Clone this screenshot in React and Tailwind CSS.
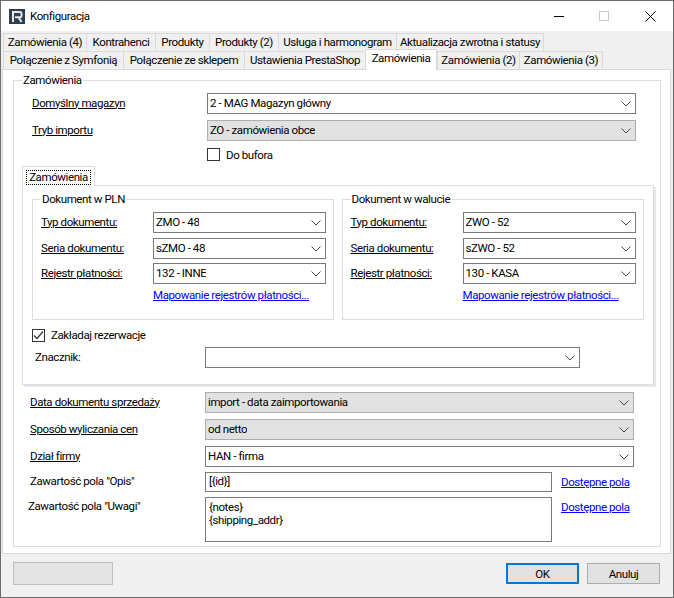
import React from 'react'

const FONT = "font-['Roboto','Liberation_Sans',sans-serif]"

function Chevron() {
  return (
    <svg width="10" height="6" viewBox="0 0 10 6" className="shrink-0" fill="none">
      <path d="M0.5 0.5 L5 5 L9.5 0.5" stroke="#4a4a4a" strokeWidth="1" />
    </svg>
  )
}

function Combo({ value, disabled, className = '' }) {
  return (
    <div
      className={`flex items-center justify-between h-[21px] pl-[2px] pr-[4px] border ${
        disabled ? 'bg-[#e1e1e1] border-[#adadad]' : 'bg-white border-[#7a7a7a]'
      } ${className}`}
    >
      <span className="truncate -mt-[2px]">{value}</span>
      <Chevron />
    </div>
  )
}

function Tab({ label, width, selected }) {
  if (selected) {
    return (
      <div
        className="relative z-10 h-[21px] -mt-[2px] flex justify-center bg-white border border-b-0 border-[#d9d9d9]"
        style={{ width }}
      >
        {label}
      </div>
    )
  }
  return (
    <div
      className="h-[19px] flex items-center justify-center pb-[1px] bg-[#f0f0f0] border border-[#d9d9d9] -mr-px"
      style={{ width }}
    >
      {label}
    </div>
  )
}

function DocGroup({ title, type, series, register, className = '' }) {
  return (
    <div className={`relative h-[121px] border border-[#dcdcdc] pt-[12px] pl-[8px] ${className}`}>
      <span className="absolute -top-[9px] left-[8px] bg-white px-[1px]">{title}</span>
      <div className="flex items-center h-[21px]">
        <span className="w-[112px] underline -mt-[2px]">Typ dokumentu:</span>
        <Combo value={type} className="w-[173px]" />
      </div>
      <div className="flex items-center h-[21px] mt-[5px]">
        <span className="w-[112px] underline -mt-[2px]">Seria dokumentu:</span>
        <Combo value={series} className="w-[173px]" />
      </div>
      <div className="flex items-center h-[21px] mt-[4px]">
        <span className="w-[112px] underline -mt-[2px]">Rejestr płatności:</span>
        <Combo value={register} className="w-[173px]" />
      </div>
      <a className="block ml-[112px] mt-[3px] leading-[16px] text-[#0000ff] underline">Mapowanie rejestrów płatności...</a>
    </div>
  )
}

function FormRow({ label, className = '', children }) {
  return (
    <div className={`flex items-center ${className}`}>
      <span className="w-[175px] pl-[16px] underline -mt-[2px]">{label}</span>
      {children}
    </div>
  )
}

export default function App() {
  const rowOne = [
    ['Zamówienia (4)', 84],
    ['Kontrahenci', 70],
    ['Produkty', 55],
    ['Produkty (2)', 70],
    ['Usługa i harmonogram', 119],
    ['Aktualizacja zwrotna i statusy', 148],
  ]
  const rowTwo = [
    ['Połączenie z Symfonią', 121],
    ['Połączenie ze sklepem', 122],
    ['Ustawienia PrestaShop', 122],
    ['Zamówienia', 72, true],
    ['Zamówienia (2)', 83],
    ['Zamówienia (3)', 84],
  ]

  return (
    <div className={`${FONT} relative w-[674px] h-[598px] flex flex-col overflow-hidden whitespace-nowrap bg-[#f0f0f0] border border-[#6b6b6b] text-[11.5px] tracking-[-0.4px] leading-[16px] text-black`}>
      {/* TITLE BAR */}
      <div className="flex items-center h-[30px] shrink-0 bg-white pl-[8px]">
        <svg width="16" height="15" viewBox="0 0 16 15" className="shrink-0">
          <rect width="16" height="15" fill="#2e3f4f" />
          <path d="M4 13 V3 H11 Q12.5 3 12.5 4.5 V7 Q12.5 8.3 11 8.3 H6 M9.5 8.3 L12.5 13" stroke="#e8e8e8" strokeWidth="2" fill="none" />
        </svg>
        <span className="ml-[5px]">Konfiguracja</span>
        <div className="ml-auto flex items-center pr-[17px]">
          <div className="w-[10px] h-px bg-black mr-[35px]" />
          <div className="w-[10px] h-[10px] border border-[#c8c8c8] mr-[36px]" />
          <svg width="11" height="11" viewBox="0 0 11 11" fill="none">
            <path d="M0.5 0.5 L10.5 10.5 M10.5 0.5 L0.5 10.5" stroke="#000" strokeWidth="1" />
          </svg>
        </div>
      </div>

      {/* OUTER TABS */}
      <div className="flex flex-col pl-[2px] pt-[2px] shrink-0">
        <div className="flex h-[18px]">
          {rowOne.map(([label, width]) => <Tab key={label} label={label} width={width} />)}
        </div>
        <div className="flex h-[18px]">
          {rowTwo.map(([label, width, selected]) => <Tab key={label} label={label} width={width} selected={selected} />)}
        </div>
      </div>

      {/* TAB PAGE */}
      <div className="ml-[1px] mr-[2px] h-[485px] shrink-0 bg-white border border-[#d9d9d9] pt-[10px] pl-[10px] pr-[9px]">
        <div className="relative h-[467px] border border-[#dcdcdc] pt-[12px]">
          <span className="absolute -top-[9px] left-[8px] bg-white px-[1px]">Zamówienia</span>

          <div className="flex items-center pl-[18px]">
            <span className="w-[175px] underline -mt-[2px]">Domyślny magazyn</span>
            <Combo value="2 - MAG Magazyn główny" className="w-[429px]" />
          </div>
          <div className="flex items-center pl-[18px] mt-[6px]">
            <span className="w-[175px] underline -mt-[2px]">Tryb importu</span>
            <Combo value="ZO - zamówienia obce" disabled className="w-[429px]" />
          </div>
          <div className="flex items-center ml-[193px] mt-[7px] h-[13px]">
            <div className="w-[13px] h-[13px] border border-[#333] bg-white" />
            <span className="ml-[6px]">Do bufora</span>
          </div>

          {/* INNER TAB CONTROL */}
          <div className="ml-[8px] mt-[5px] w-[632px]">
            <div className="relative z-10 w-[73px] h-[20px] bg-white border border-b-0 border-[#d9d9d9] p-[3px] pb-[1px]">
              <div className="h-[15px] leading-[13px] text-center border border-dotted border-black">Zamówienia</div>
            </div>
            <div className="h-[200px] -mt-px border border-[#dcdcdc] shadow-[2px_2px_0_#e8e8e8] pt-[13px] px-[9px]">
              <div className="flex gap-[8px]">
                <DocGroup title="Dokument w PLN" type="ZMO - 48" series="sZMO - 48" register="132 - INNE" className="w-[303px]" />
                <DocGroup title="Dokument w walucie" type="ZWO - 52" series="sZWO - 52" register="130 - KASA" className="w-[304px]" />
              </div>
              <div className="flex items-center mt-[9px] h-[13px]">
                <div className="w-[13px] h-[13px] border border-[#333] flex items-center justify-center">
                  <svg width="11" height="11" viewBox="0 0 11 11" fill="none">
                    <path d="M1 5.5 L4 8.5 L10 1.5" stroke="#333" strokeWidth="1.2" />
                  </svg>
                </div>
                <span className="ml-[6px] -mt-[1px]">Zakładaj rezerwacje</span>
              </div>
              <div className="flex items-center mt-[5px] pl-[3px]">
                <span className="w-[170px] -mt-[2px]">Znacznik:</span>
                <Combo value="" className="w-[375px]" />
              </div>
            </div>
          </div>

          {/* LOWER FIELDS */}
          <div className="mt-[7px]">
            <FormRow label="Data dokumentu sprzedaży">
              <Combo value="import - data zaimportowania" disabled className="w-[429px] ml-[16px]" />
            </FormRow>
            <FormRow label="Sposób wyliczania cen" className="mt-[6px]">
              <Combo value="od netto" disabled className="w-[429px] ml-[16px]" />
            </FormRow>
            <FormRow label="Dział firmy" className="mt-[6px]">
              <Combo value="HAN - firma" className="w-[429px] ml-[16px]" />
            </FormRow>
            <div className="flex items-center mt-[5px] pl-[16px] h-[20px]">
              <span className="w-[175px] -mt-[2px]">Zawartość pola "Opis"</span>
              <div className="w-[347px] h-[20px] border border-[#7a7a7a] pl-[3px] leading-[16px]">[{'{id}'}]</div>
              <a className="ml-[9px] -mt-[1px] text-[#0000ff] underline">Dostępne pola</a>
            </div>
            <div className="flex items-start mt-[5px] pl-[14px]">
              <span className="w-[177px] pt-[1px]">Zawartość pola "Uwagi"</span>
              <div className="w-[347px] h-[45px] border border-[#7a7a7a] pl-[3px] pt-[3px] leading-[13px]">
                <div>{'{notes}'}</div>
                <div>{'{shipping_addr}'}</div>
              </div>
              <a className="ml-[9px] mt-[2px] text-[#0000ff] underline">Dostępne pola</a>
            </div>
          </div>
        </div>
      </div>

      {/* FOOTER BUTTONS */}
      <div className="flex items-start pt-[9px] pl-[12px] pr-[13px]">
        <div className="w-[100px] h-[23px] -mt-px bg-[#e3e3e3] border border-[#bfbfbf]" />
        <div className="ml-auto w-[73px] h-[21px] flex items-center justify-center bg-[#e1e1e1] border-2 border-[#0078d7]">OK</div>
        <div className="ml-[8px] w-[73px] h-[21px] flex items-center justify-center bg-[#e1e1e1] border border-[#adadad]">Anuluj</div>
      </div>
    </div>
  )
}
